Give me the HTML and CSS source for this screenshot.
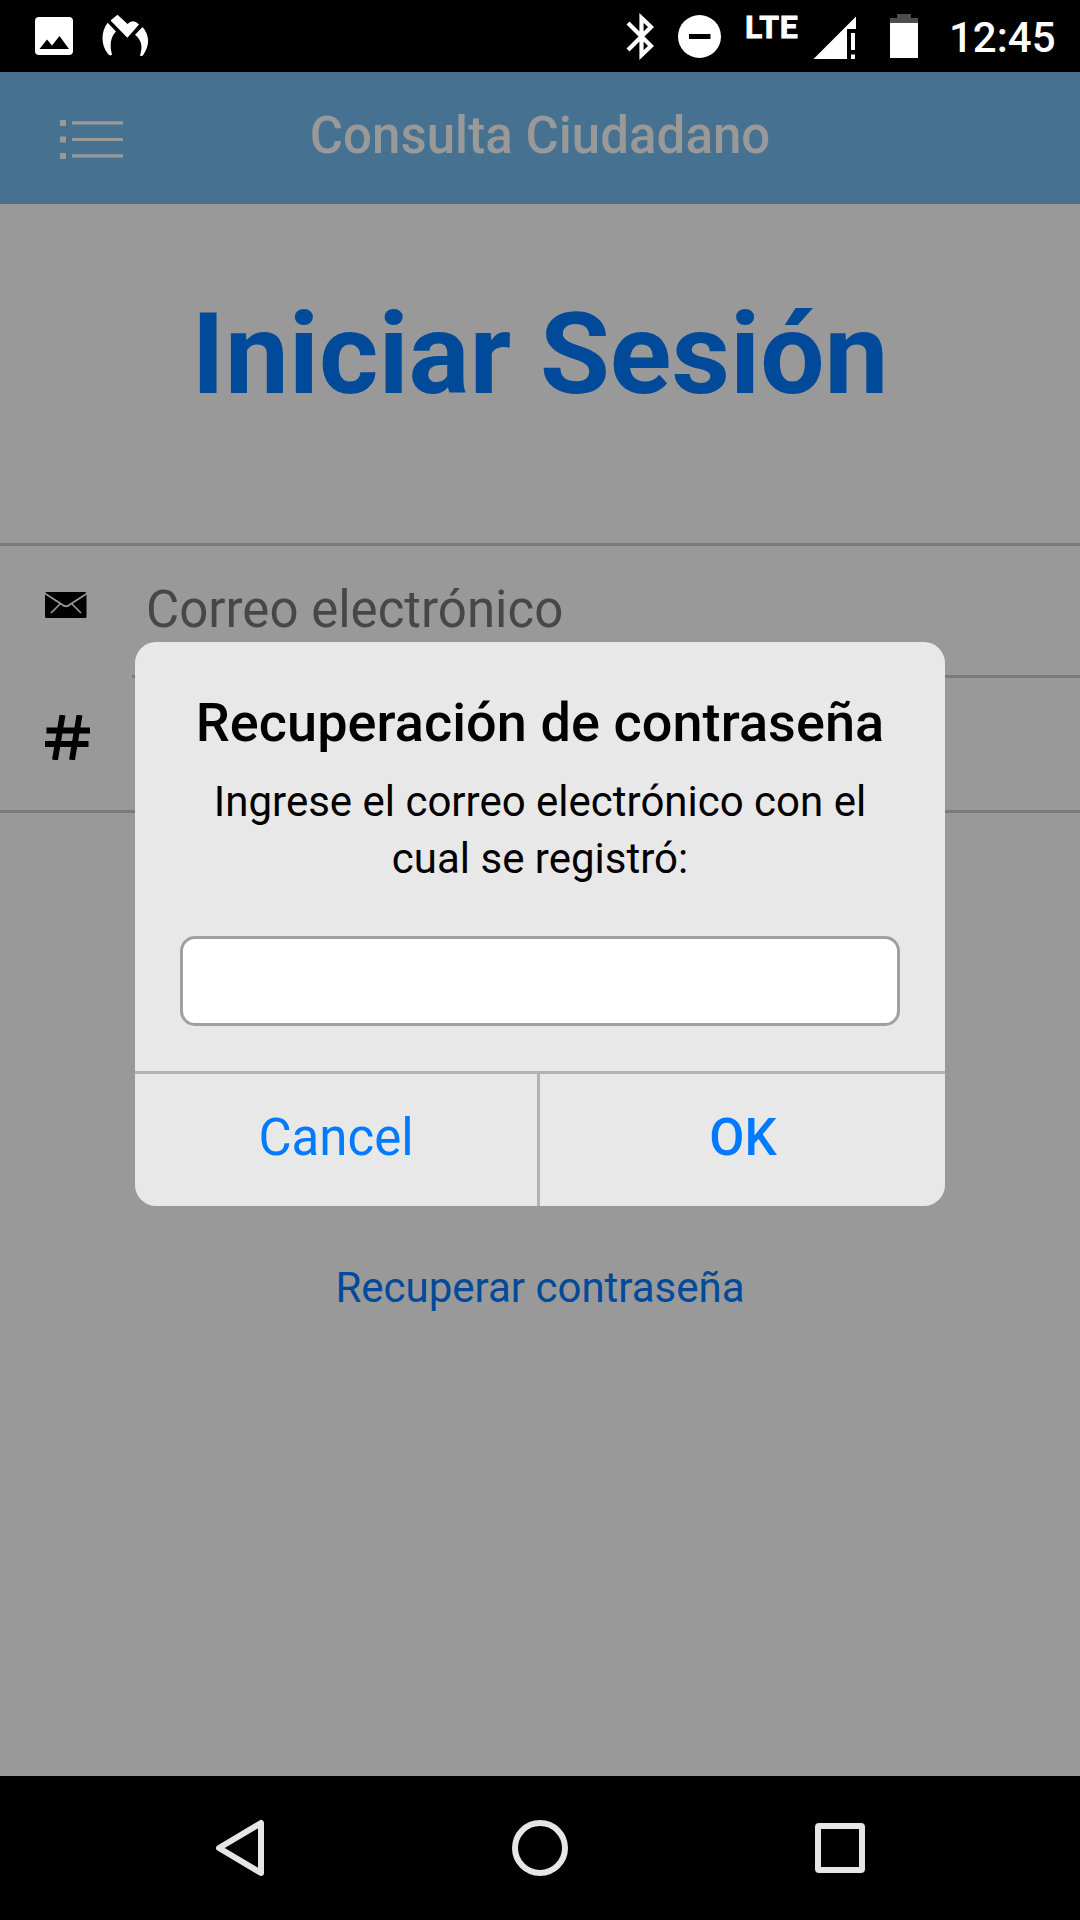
FILE: index.html
```html
<!DOCTYPE html>
<html lang="es">
<head>
<meta charset="utf-8">
<title>Consulta Ciudadano</title>
<link rel="stylesheet" href="styles.css">
</head>
<body>
<div class="screen">
  <div class="status-bar">
    <svg class="status-left" viewBox="0 0 160 72" aria-hidden="true">
      <rect x="35" y="17" width="38" height="38" rx="4" fill="#fff"/>
      <path d="M39.500 49L47 39.500L52 45.500L59.500 36L69 49Z" fill="#000"/>
      <g fill="#fff">
        <path d="M117.500 14.700L127.500 24Q133 18.300 139 24.500L127.400 37.800L110.500 20.500Z"/>
        <path d="M107.700 22.800L116 31.500C110.500 37 109.500 45 112 54.500Q110 56.500 108 54C100.500 45 101 31 107.700 22.800Z"/>
        <path d="M142.500 27L135 34.800C141.500 40 143 47 140 55.500Q142 57 143.500 54.500C150 45 149.500 35 142.500 27Z"/>
      </g>
    </svg>
    <div class="status-right">
      <svg class="status-icons" viewBox="620 0 320 72" aria-hidden="true">
        <path d="M628 23L651 46L641.500 55V18L651 27L628 50" fill="none" stroke="#fff" stroke-width="4.200"/>
        <circle cx="699.500" cy="36.500" r="21.500" fill="#fff"/>
        <rect x="689" y="34" width="21.500" height="5" fill="#000"/>
        <path d="M813.500 59L856 16.500V29H847V59Z" fill="#fff"/>
        <path d="M851 33h4v17h-4zM851 54.500h4v4.500h-4z" fill="#fff"/>
        <path d="M897 14h14v4h7v5h-28v-5h7z" fill="#4d4d4d"/>
        <rect x="890" y="23" width="28" height="35" fill="#fff"/>
      </svg>
      <span class="network">LTE</span>
      <span class="clock">12:45</span>
    </div>
  </div>

  <header class="navbar">
    <svg class="menu-icon" viewBox="0 0 63 39" aria-label="Menú">
      <path d="M0 0h6v6H0zM0 16.500h6v6H0zM0 33h6v6H0zM12 1.300h51v3.200H12zM12 18h51v3H12zM12 34.300h51v3.200H12z" fill="#999"/>
    </svg>
    <div class="navbar-title">Consulta Ciudadano</div>
  </header>

  <main class="page">
    <h1 class="page-title">Iniciar Sesión</h1>
    <div class="fields">
      <div class="field">
        <svg class="mail-icon" viewBox="0 0 42 26" aria-hidden="true">
          <rect width="41.500" height="26" rx="1.500" fill="#000"/>
          <path d="M0 1.500L17 12.500Q21 16 25 12.500L42 1.500M15 12L6 21M27 12L36 21" fill="none" stroke="#999" stroke-width="1.700"/>
        </svg>
        <div class="field-text">Correo electrónico</div>
      </div>
      <div class="field">
        <svg class="hash-icon" viewBox="0 0 45 45" aria-hidden="true">
          <path d="M17.500 0L10 45M34.500 0L27 45M1.500 15.500H45M0 29H43.500" fill="none" stroke="#000" stroke-width="5.900"/>
        </svg>
        <div class="field-text"></div>
      </div>
    </div>
    <a class="recover">Recuperar contraseña</a>
  </main>

  <nav class="system-nav">
    <svg viewBox="0 0 60 60"><path d="M51 5V55L9 30Z" fill="none" stroke="#e6e6e6" stroke-width="6" stroke-linejoin="round"/></svg>
    <svg viewBox="0 0 60 60"><circle cx="30" cy="30" r="25" fill="none" stroke="#e6e6e6" stroke-width="6"/></svg>
    <svg viewBox="0 0 60 60"><rect x="8" y="8" width="44" height="44" rx="1" fill="none" stroke="#e6e6e6" stroke-width="6"/></svg>
  </nav>

  <div class="modal-layer">
    <div class="modal" role="dialog">
      <div class="modal-body">
        <div class="modal-title">Recuperación de contraseña</div>
        <div class="modal-text">Ingrese el correo electrónico con el cual se registró:</div>
        <input class="modal-input" type="text" aria-label="Correo electrónico">
      </div>
      <div class="modal-actions">
        <div class="modal-button modal-cancel">Cancel</div>
        <div class="modal-button modal-ok">OK</div>
      </div>
    </div>
  </div>
</div>
</body>
</html>
```
FILE: styles.css
```css
* { box-sizing: border-box; }
body { margin: 0; font-family: Roboto, sans-serif; }
svg { display: block; flex: none; }

.screen {
  position: relative;
  display: flex;
  flex-direction: column;
  width: 1080px;
  height: 1920px;
  overflow: hidden;
  background: #999;
}

.status-bar {
  display: flex;
  justify-content: space-between;
  height: 72px;
  background: #000;
  color: #fff;
}
.status-left { width: 160px; height: 72px; }
.status-right { position: relative; display: flex; width: 460px; }
.status-icons { width: 320px; height: 72px; }
.network {
  position: absolute;
  left: 125px;
  top: 8px;
  font-size: 32px;
  font-weight: 700;
  line-height: 38px;
  letter-spacing: 0.6px;
  -webkit-text-stroke: 0.8px #fff;
}
.clock {
  padding-left: 9px;
  font-size: 42px;
  font-weight: 500;
  line-height: 76px;
}

.navbar {
  display: grid;
  grid-template-columns: 132px 1fr 132px;
  height: 132px;
  background: #467190;
  color: #999;
}
.menu-icon { width: 63px; height: 39px; margin: 48px 0 0 60px; }
.navbar-title {
  font-size: 51px;
  font-weight: 500;
  line-height: 127px;
  letter-spacing: 0.05px;
  text-align: center;
}

.page { flex: 1; display: flex; flex-direction: column; }
.page-title {
  margin: 83px 0 122px;
  color: #004a99;
  font-size: 114px;
  font-weight: 700;
  line-height: 134px;
  text-align: center;
}
.fields { border: solid #7a7a7a; border-width: 3px 0; }
.field { display: flex; height: 132px; padding-left: 45px; }
.mail-icon { width: 42px; height: 26px; margin: 46px 45px 0 0; }
.hash-icon { width: 45px; height: 45px; margin: 37px 42px 0 0; }
.field-text {
  flex: 1;
  padding-left: 14px;
  color: #474747;
  font-size: 51px;
  line-height: 127px;
}
.field:first-child .field-text { border-bottom: 3px solid #7a7a7a; }
.recover {
  margin-top: 450px;
  color: #004a99;
  font-size: 42px;
  line-height: 50px;
  text-align: center;
}

.system-nav {
  display: flex;
  justify-content: center;
  align-items: center;
  gap: 240px;
  height: 144px;
  background: #000;
}
.system-nav svg { width: 60px; height: 60px; }

.modal-layer {
  position: absolute;
  inset: 72px 0 144px;
  display: flex;
  align-items: center;
  justify-content: center;
}
.modal {
  width: 810px;
  height: 564px;
  overflow: hidden;
  border-radius: 21px;
  background: #e8e8e8;
  color: #000;
}
.modal-body {
  height: 432px;
  padding: 48px 45px 0;
  border-bottom: 3px solid #b3b3b3;
  text-align: center;
}
.modal-title {
  font-size: 54px;
  font-weight: 500;
  line-height: 66px;
  letter-spacing: 0.08px;
  white-space: nowrap;
}
.modal-text { margin-top: 17px; font-size: 42px; line-height: 57px; }
.modal-input {
  display: block;
  width: 720px;
  height: 90px;
  margin: 49px 0 0;
  border: 3px solid #a0a0a0;
  border-radius: 15px;
  background: #fff;
}
.modal-actions { display: grid; grid-template-columns: 405px 405px; height: 132px; }
.modal-button {
  color: #007aff;
  font-size: 51px;
  line-height: 127px;
  text-align: center;
}
.modal-cancel { border-right: 3px solid #b3b3b3; }
.modal-ok { padding-left: 1px; font-weight: 500; }
```
